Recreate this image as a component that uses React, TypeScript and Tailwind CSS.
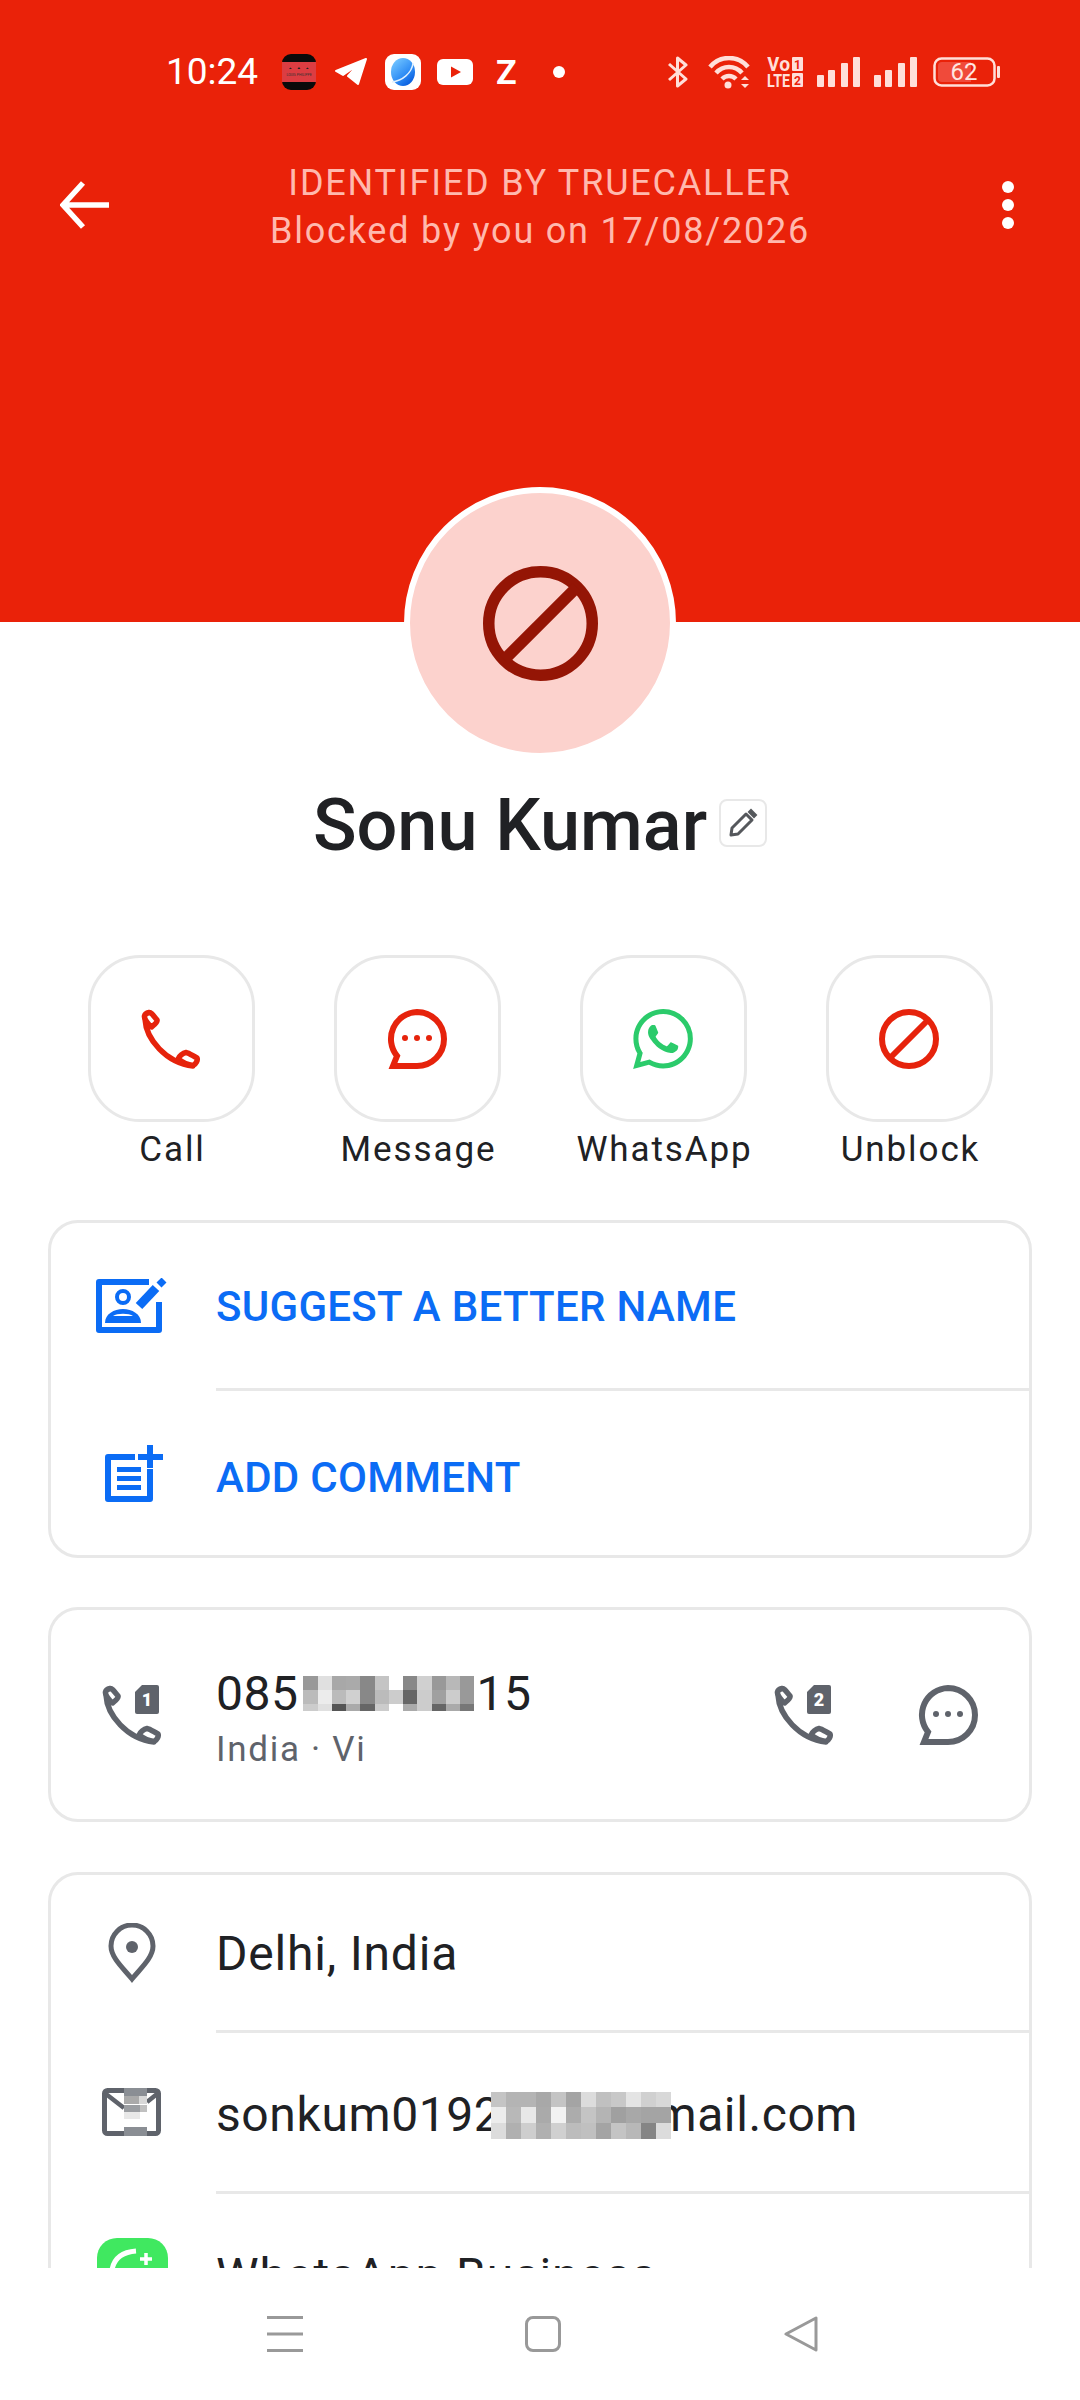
import { SiWhatsapp } from 'react-icons/si';

const phonePath =
  'M8 3.5C10 3 12 6 16 11C17 13 13 16 10.5 18C7 15 3 10 3.5 7C4 5 6 4 8 3.5ZM45 43.5C48 44 52 47 56 49C57 51 55 55 52 56.5C47 56 41 53 37 50C38 47 42 44 45 43.5ZM4 10C5 30 25 54 52 57';

const numberCells = [
  ['#999', '#e0e0e0', '#a8a8a8', '#aaa', '#888', '#c4c4c4', '#fff', '#888', '#d0d0d0', '#999', '#b8b8b8', '#999'],
  ['#bbb', '#ececec', '#bbb', '#d0d0d0', '#888', '#bbb', '#ccc', '#666', '#ccc', '#a0a0a0', '#ccc', '#999'],
  ['#ccc', '#e0e0e0', '#555', '#aaa', '#666', '#ccc', '#fff', '#aaa', '#ccc', '#666', '#aaa', '#777'],
];

const emailCells = [
  ['#c4c4c4', '#b4b4b4', '#b4b4b4', '#a8a8a8', '#c4c4c4', '#a4a4a4', '#dcdcdc', '#c0c0c0', '#c8c8c8', '#e4e4e4', '#d0d0d0', '#d8d8d8'],
  ['#ececec', '#b8b8b8', '#e8e8e8', '#aaa', '#f2f2f2', '#acacac', '#c4c4c4', '#b4b4b4', '#a0a0a0', '#a8a8a8', '#a4a4a4', '#a4a4a4'],
  ['#dcdcdc', '#b0b0b0', '#cecece', '#b0b0b0', '#d0d0d0', '#bcbcbc', '#c0c0c0', '#a4a4a4', '#c4c4c4', '#b8b8b8', '#858585', '#dcdcdc'],
];

function Mosaic({ rows, cellWidth, rowHeights }: { rows: string[][]; cellWidth: number; rowHeights: number[] }) {
  return (
    <div className="flex flex-col shrink-0 relative z-10">
      {rows.map((row, r) => (
        <div key={r} className="flex">
          {row.map((color, c) => (
            <div key={c} style={{ width: cellWidth, height: rowHeights[r], backgroundColor: color }} />
          ))}
        </div>
      ))}
    </div>
  );
}

// viewBox is 60 units, so weight is given in those units
function BlockIcon({ className, strokeWidth }: { className: string; strokeWidth: number }) {
  return (
    <svg viewBox="0 0 60 60" className={className} fill="none" stroke="currentColor" strokeWidth={strokeWidth}>
      <circle cx="30" cy="30" r={30 - strokeWidth / 2} />
      <path d="M49 11L11 49" />
    </svg>
  );
}

function PhoneIcon({ className }: { className: string }) {
  return (
    <svg viewBox="0 0 60 60" className={className} fill="none" stroke="currentColor" strokeWidth="5.5" strokeLinejoin="round" strokeLinecap="round">
      <path d={phonePath} />
    </svg>
  );
}

function SimPhoneIcon({ n }: { n: string }) {
  return (
    <svg viewBox="0 0 60 60" className="w-[60px] h-[60px] text-[#5f636b]">
      <path d={phonePath} fill="none" stroke="currentColor" strokeWidth="5.5" strokeLinejoin="round" strokeLinecap="round" />
      <path d="M40 0H55A2 2 0 0 1 57 2V27A2 2 0 0 1 55 29H35A2 2 0 0 1 33 27V7Z" fill="currentColor" />
      <text x="45" y="21" textAnchor="middle" fontSize="18" fontWeight="900" fill="#fff" fontFamily="Roboto, sans-serif">{n}</text>
    </svg>
  );
}

function BubbleIcon({ className }: { className: string }) {
  return (
    <svg viewBox="0 0 60 60" className={className} fill="none">
      <path d="M30 3A27 27 0 1 1 30 57H6L10 47A27 27 0 0 1 30 3Z" stroke="currentColor" strokeWidth="6" />
      <circle cx="18" cy="29" r="3" fill="currentColor" />
      <circle cx="30" cy="29" r="3" fill="currentColor" />
      <circle cx="42" cy="29" r="3" fill="currentColor" />
    </svg>
  );
}

function SignalBars() {
  return (
    <svg viewBox="0 0 43 30" className="w-[43px] h-[30px]" fill="#ffdfd9">
      <rect x="0" y="18" width="7" height="12" rx="1" />
      <rect x="11" y="13" width="7" height="17" rx="1" />
      <rect x="24" y="6" width="7" height="24" rx="1" />
      <rect x="36" y="0" width="7" height="30" rx="1" />
    </svg>
  );
}

function StatusBar() {
  return (
    <div className="flex items-center h-[36px] pl-[166px]">
      <span className="text-[37px] leading-[36px] text-white w-[116px]">10:24</span>

      {/* notification icons */}
      <svg viewBox="0 0 34 36" className="w-[34px] h-[36px]">
        <rect width="34" height="36" rx="9" fill="#0a0a0a" />
        <rect y="8" width="34" height="20" fill="#dc3d42" />
        <path d="M7 15l1.5-1.5L10 15ZM15.500 15l1.500-2 1.500 2ZM24 15l1.500-1.500L27 15Z" fill="#222" />
        <text x="17" y="22" textAnchor="middle" fontSize="3.500" fill="#333" fontFamily="Roboto, sans-serif">LOUIS PHILIPPE</text>
      </svg>
      <svg viewBox="0 0 32 28" className="w-[32px] h-[28px] ml-[19px]" fill="#fff" stroke="#fff" strokeWidth="2" strokeLinejoin="round">
        <path d="M1 13L31 1L23 26L13 18L24 6L8 17Z" />
      </svg>
      <svg viewBox="0 0 36 36" className="w-[36px] h-[36px] ml-[18px]">
        <defs>
          <linearGradient id="planet" x1="0.200" y1="0.100" x2="0.800" y2="0.900">
            <stop offset="0" stopColor="#6cc0ff" />
            <stop offset="0.600" stopColor="#2f8df5" />
            <stop offset="1" stopColor="#0a5fe0" />
          </linearGradient>
        </defs>
        <rect width="36" height="36" rx="9" fill="#fff" />
        <ellipse cx="18" cy="18" rx="12" ry="14" fill="url(#planet)" />
        <path d="M28 9C27 19 17 27 7 28" stroke="#dff0ff" strokeWidth="1.500" fill="none" />
      </svg>
      <svg viewBox="0 0 36 26" className="w-[36px] h-[26px] ml-[16px]">
        <rect width="36" height="26" rx="6" fill="#fff" />
        <path d="M14 7.500L24 13L14 18.500Z" fill="#ea2209" />
      </svg>
      <span className="text-[34px] leading-[36px] font-bold text-white ml-[23px] w-[22px]">Z</span>
      <div className="w-[12px] h-[12px] rounded-full bg-white ml-[35px]" />

      {/* system icons */}
      <svg viewBox="0 0 20 32" className="w-[20px] h-[32px] ml-[103px]" fill="none" stroke="#ffdfd9" strokeWidth="3" strokeLinejoin="round">
        <path d="M1 8L18 23L9.500 30V2L18 9L1 24" />
      </svg>
      <svg viewBox="0 0 45 33" className="w-[45px] h-[33px] ml-[20px]" fill="none" stroke="#ffdfd9" strokeWidth="4.500">
        <path d="M2 11C12 -1 30 -1 40 11" />
        <path d="M8 17C15 9 27 9 34 17" />
        <path d="M14 23C18 19 24 19 28 23" />
        <circle cx="20" cy="29" r="3.500" fill="#ffdfd9" stroke="none" />
        <path d="M33 24L37 20L41 24ZM33 28L37 32L41 28Z" fill="#ffdfd9" stroke="none" />
      </svg>
      <svg viewBox="0 0 36 30" className="w-[36px] h-[30px] ml-[14px]" fontFamily="Roboto, sans-serif" fontWeight="700" fill="#ffdfd9">
        <text x="0" y="14" fontSize="20" textLength="23" lengthAdjust="spacingAndGlyphs">Vo</text>
        <text x="0" y="30" fontSize="19" textLength="23" lengthAdjust="spacingAndGlyphs">LTE</text>
        <rect x="25" y="0" width="11" height="14" rx="1" />
        <rect x="25" y="16" width="11" height="14" rx="1" />
        <text x="30.500" y="12" fontSize="12" textAnchor="middle" fill="#ea2209">1</text>
        <text x="30.500" y="28" fontSize="12" textAnchor="middle" fill="#ea2209">2</text>
      </svg>
      <div className="ml-[14px]"><SignalBars /></div>
      <div className="ml-[14px]"><SignalBars /></div>
      <svg viewBox="0 0 67 30" className="w-[67px] h-[30px] ml-[16px]" fontFamily="Roboto, sans-serif">
        <rect x="1.500" y="1.500" width="60" height="27" rx="7" fill="none" stroke="#ffdfd9" strokeWidth="2.500" />
        <path d="M5 9A4 4 0 0 1 9 5H38V25H9A4 4 0 0 1 5 21Z" fill="#f04a3a" />
        <text x="31" y="23" textAnchor="middle" fontSize="24" fill="#ffe6e1">62</text>
        <rect x="64" y="9" width="3" height="12" rx="1" fill="#ffdfd9" />
      </svg>
    </div>
  );
}

function Header() {
  return (
    <div className="h-[622px] pt-[54px] bg-[#ea2209]">
      <StatusBar />
      <div className="grid grid-cols-[1fr_auto_1fr] items-center mt-[64px] px-[60px]">
        <svg viewBox="0 0 50 48" className="w-[50px] h-[48px] justify-self-start" fill="none" stroke="#fff" strokeWidth="5.500">
          <path d="M49 24H3M23 2L3 24L23 46" />
        </svg>
        <div className="pt-[5px] text-center text-[#ffb9ae] text-[36px] leading-[48px] tracking-[1.8px]">
          <div>IDENTIFIED BY TRUECALLER</div>
          <div>Blocked by you on 17/08/2026</div>
        </div>
        <div className="flex flex-col gap-[6px] justify-self-end mr-[6px]">
          <div className="w-[12px] h-[12px] rounded-full bg-white" />
          <div className="w-[12px] h-[12px] rounded-full bg-white" />
          <div className="w-[12px] h-[12px] rounded-full bg-white" />
        </div>
      </div>
    </div>
  );
}

function ActionButton({ label, icon }: { label: string; icon: React.ReactNode }) {
  return (
    <div className="flex flex-col items-center">
      <div className="w-[167px] h-[167px] rounded-[52px] border-[3px] border-[#e8e8e8] flex items-center justify-center">
        {icon}
      </div>
      <span className="mt-[6px] pl-[3px] text-[35px] leading-[44px] tracking-[1.9px] text-[#202124]">{label}</span>
    </div>
  );
}

function Card({ className, children }: { className: string; children: React.ReactNode }) {
  return <div className={`mx-[48px] border-[3px] border-[#e8e8e8] rounded-[30px] ${className}`}>{children}</div>;
}

function Divider() {
  return <div className="h-[3px] bg-[#e8e8e8] ml-[165px]" />;
}

export default function App() {
  return (
    <div className="w-[1080px] h-[2400px] bg-white flex flex-col overflow-hidden font-['Roboto',sans-serif]">
      <div className="h-[2268px] overflow-hidden">
        <Header />

        {/* avatar */}
        <div className="w-[272px] h-[272px] mx-auto -mt-[135px] rounded-full bg-[#fcd2cd] border-[6px] border-white flex items-center justify-center relative">
          <BlockIcon className="w-[115px] h-[115px] text-[#941505]" strokeWidth={6} />
        </div>

        <div className="flex justify-center items-center gap-[12px] h-[80px] mt-[24px]">
          <span className="pt-[6px] text-[72px] leading-[80px] font-medium text-[#202124]">Sonu Kumar</span>
          <div className="w-[48px] h-[48px] rounded-[8px] border-[2px] border-[#e8e8e8] flex items-center justify-center">
            <svg viewBox="0 0 30 30" className="w-[30px] h-[30px]" fill="none" stroke="#55585c">
              <path d="M3 27L4 20L18 6L24 12L10 26Z" strokeWidth="3" strokeLinejoin="round" />
              <path d="M21 4L23 2L28 7L26 9Z" fill="#55585c" strokeWidth="2" />
            </svg>
          </div>
        </div>

        <div className="grid grid-cols-4 mx-[48px] mt-[92px]">
          <ActionButton label="Call" icon={<PhoneIcon className="w-[60px] h-[60px] text-[#e6230c]" />} />
          <ActionButton label="Message" icon={<BubbleIcon className="w-[60px] h-[60px] text-[#e6230c]" />} />
          <ActionButton label="WhatsApp" icon={<SiWhatsapp className="w-[60px] h-[60px] text-[#2bcb6b]" />} />
          <ActionButton label="Unblock" icon={<BlockIcon className="w-[60px] h-[60px] text-[#e6230c]" strokeWidth={6} />} />
        </div>

        <Card className="mt-[48px]">
          <div className="flex items-center h-[165px]">
            <div className="w-[165px] pl-[45px] shrink-0">
              <svg viewBox="0 0 71 55" className="w-[71px] h-[55px] text-[#0b6cf5]" fill="none" stroke="currentColor">
                <path d="M53 4H3V52H63V24" strokeWidth="6" strokeLinejoin="round" />
                <circle cx="27" cy="19" r="6" strokeWidth="4" />
                <path d="M9 45C9 36 18 31 27 31C36 31 45 36 45 45Z" fill="currentColor" stroke="none" />
                <path d="M17 38C21 35 33 35 37 38Z" fill="#fff" stroke="none" />
                <path d="M43 28L60 10" strokeWidth="9" />
                <path d="M63 7L68 2" strokeWidth="7" />
              </svg>
            </div>
            <span className="pt-[2px] text-[42px] tracking-[0.3px] font-medium text-[#0b6cf5]">SUGGEST A BETTER NAME</span>
          </div>
          <Divider />
          <div className="flex items-center h-[164px]">
            <div className="w-[165px] pl-[54px] shrink-0">
              <svg viewBox="0 0 58 57" className="w-[58px] h-[57px] text-[#0b6cf5]" fill="none" stroke="currentColor" strokeWidth="6" strokeLinejoin="round">
                <path d="M30 12H3V54H45V24" />
                <path d="M33 12H58M45 0V23" />
                <path d="M12 24.500H36M12 33.500H36M12 42.500H36" strokeWidth="5" />
              </svg>
            </div>
            <span className="pt-[9px] text-[42px] tracking-[0.3px] font-medium text-[#0b6cf5]">ADD COMMENT</span>
          </div>
        </Card>

        <Card className="mt-[49px] h-[215px] flex items-center">
          <div className="w-[165px] pl-[51px] shrink-0 flex">
            <SimPhoneIcon n="1" />
          </div>
          <div className="flex-1 pt-[11px]">
            <div className="flex items-center h-[50px] text-[48px] leading-[50px] tracking-[0.5px] font-[450] text-[#202124]">
              <span>085</span>
              <div className="ml-[5px] mr-[2px]">
                <Mosaic rows={numberCells} cellWidth={14.25} rowHeights={[14, 14, 7]} />
              </div>
              <span>15</span>
            </div>
            <div className="mt-[9px] text-[35px] leading-[44px] tracking-[1.7px] text-[#5f636b]">India · Vi</div>
          </div>
          <div className="flex items-center gap-[84px] pr-[51px]">
            <SimPhoneIcon n="2" />
            <BubbleIcon className="w-[60px] h-[60px] text-[#5f636b]" />
          </div>
        </Card>

        <Card className="mt-[50px]">
          <div className="flex items-center h-[155px]">
            <div className="w-[165px] pl-[57px] shrink-0">
              <svg viewBox="0 0 48 60" className="w-[48px] h-[60px] text-[#5f636b]" fill="none">
                <path d="M24 56C16 46 3 35 3 23A21 21 0 0 1 45 23C45 35 32 46 24 56Z" stroke="currentColor" strokeWidth="5" />
                <circle cx="24" cy="24" r="6" fill="currentColor" />
              </svg>
            </div>
            <span className="pt-[3px] text-[48px] tracking-[0.8px] font-[450] text-[#202124]">Delhi, India</span>
          </div>
          <Divider />
          <div className="flex items-center h-[158px]">
            <div className="w-[165px] pl-[51px] shrink-0">
              <svg viewBox="0 0 59 48" className="w-[59px] h-[48px]" fill="none">
                <rect x="2.500" y="2.500" width="54" height="43" rx="3" stroke="#5f636b" strokeWidth="5" />
                <path d="M4 6L22 20M55 6L45 14" stroke="#5f636b" strokeWidth="4.500" />
                <rect x="22" y="0" width="23" height="8" fill="#8a8e94" />
                <rect x="22" y="8" width="15" height="8" fill="#aaaaaa" />
                <rect x="37" y="8" width="8" height="8" fill="#d8d8d8" />
                <rect x="22" y="17" width="16" height="7" fill="#9b9ea2" />
                <rect x="38" y="17" width="7" height="7" fill="#c0c0c0" />
                <rect x="22" y="24" width="16" height="7" fill="#e8e8e8" />
                <rect x="22" y="39" width="23" height="9" fill="#8a8e94" />
              </svg>
            </div>
            <div className="flex items-center pt-[6px] text-[48px] tracking-[0.6px] font-[450] text-[#202124]">
              <span>sonkum0192</span>
              <div className="-ml-[10px] -mr-[17px]">
                <Mosaic rows={emailCells} cellWidth={15} rowHeights={[15, 16, 16]} />
              </div>
              <span>mail.com</span>
            </div>
          </div>
          <Divider />
          <div className="flex items-center h-[159px]">
            <div className="w-[165px] pl-[46px] shrink-0">
              <svg viewBox="0 0 71 71" className="w-[71px] h-[71px]" fill="none">
                <rect width="71" height="71" rx="20" fill="#40e860" />
                <path d="M15 32C17 20 26 14 39 13" stroke="#fff" strokeWidth="5" />
                <path d="M43 21H55M49 15V27" stroke="#fff" strokeWidth="3.500" />
              </svg>
            </div>
            <span className="pt-[4px] text-[48px] tracking-[0.8px] font-[450] text-[#202124]">WhatsApp Business</span>
          </div>
        </Card>
      </div>

      {/* nav bar */}
      <div className="flex-1 flex items-center">
        <div className="grid grid-cols-3 w-[774px] ml-[156px] justify-items-center">
          <svg viewBox="0 0 36 36" className="w-[36px] h-[36px]" fill="#999">
            <rect y="0" width="36" height="3" />
            <rect y="16.500" width="36" height="3" />
            <rect y="33" width="36" height="3" />
          </svg>
          <div className="w-[36px] h-[36px] rounded-[8px] border-[3px] border-[#999]" />
          <svg viewBox="0 0 36 36" className="w-[36px] h-[36px]" fill="none" stroke="#999" strokeWidth="3" strokeLinejoin="round">
            <path d="M33 2V34L3 18Z" />
          </svg>
        </div>
      </div>
    </div>
  );
}
